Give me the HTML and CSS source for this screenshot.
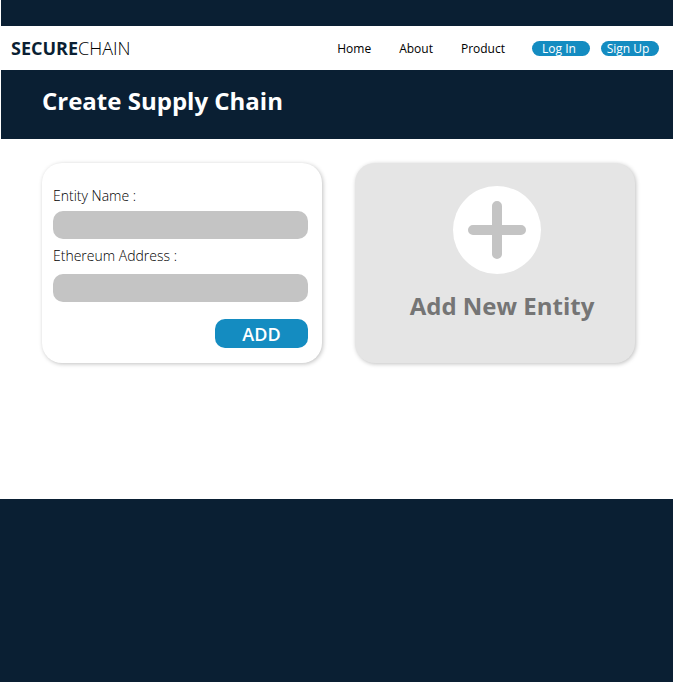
FILE: index.html
```html
<!DOCTYPE html>
<html lang="en">
<head>
<meta charset="utf-8">
<meta name="viewport" content="width=device-width, initial-scale=1">
<title>SecureChain - Create Supply Chain</title>
<link rel="stylesheet" href="styles.css">
</head>
<body>
<header class="header">
  <div class="topbar">
    <a class="logo" href="#"><span class="logo-strong">SECURE</span>CHAIN</a>
    <nav class="nav">
      <a class="nav-link" href="#">Home</a>
      <a class="nav-link" href="#">About</a>
      <a class="nav-link" href="#">Product</a>
    </nav>
    <div class="account">
      <button class="pill" type="button">Log In</button>
      <button class="pill" type="button">Sign Up</button>
    </div>
  </div>
  <h1 class="title">Create Supply Chain</h1>
</header>
<main class="main">
  <form class="card entity-form">
    <label class="label" for="entity-name">Entity Name :</label>
    <input class="field" id="entity-name" type="text">
    <label class="label label-address" for="eth-address">Ethereum Address :</label>
    <input class="field" id="eth-address" type="text">
    <button class="add" type="button">ADD</button>
  </form>
  <button class="card new-entity" type="button">
    <svg class="plus" viewBox="0 0 88 88" aria-hidden="true">
      <circle cx="44" cy="44" r="44" fill="#fff"/>
      <path d="M44 20v48M20 44h48" stroke="#c4c4c4" stroke-width="10" stroke-linecap="round"/>
    </svg>
    <span class="new-entity-text">Add New Entity</span>
  </button>
</main>
<footer class="footer"></footer>
</body>
</html>
```
FILE: styles.css
```css
* {
  box-sizing: border-box;
}

body {
  display: flex;
  flex-direction: column;
  min-height: 100vh;
  margin: 0;
  background: #fff;
  color: #000;
  font-family: "Open Sans", sans-serif;
}

button,
input {
  border: 0;
  font-family: inherit;
}

a {
  color: inherit;
  text-decoration: none;
}

.header {
  margin-left: 1px;
  padding-top: 26px;
  background: #0a1f33;
}

.topbar {
  display: flex;
  align-items: center;
  height: 44px;
  padding: 0 14px 0 10px;
  background: #fff;
}

.logo {
  margin-right: auto;
  font-size: 18px;
  font-weight: 300;
  line-height: 24px;
}

.logo-strong {
  color: #0a1f33;
  font-weight: 700;
}

.nav {
  display: flex;
  gap: 28px;
  margin-right: 27px;
}

.nav-link {
  padding-top: 1px;
  font-size: 12px;
  line-height: 16px;
}

.account {
  display: flex;
  gap: 11px;
}

.pill {
  width: 58px;
  height: 15px;
  padding: 0 4px 0 0;
  border-radius: 8px;
  background: #148cc1;
  color: #fff;
  font-size: 12px;
  line-height: 15px;
  white-space: nowrap;
}

.title {
  margin: 0;
  padding: 15px 41px 22px;
  color: #fff;
  font-size: 24px;
  font-weight: 700;
  line-height: 32px;
}

.main {
  display: grid;
  grid-template-columns: 1fr 1fr;
  gap: 33px;
  align-items: start;
  min-height: 360px;
  padding: 24px 38px 24px 42px;
}

.card {
  height: 200px;
  border-radius: 20px;
  box-shadow: 1px 1px 4px rgba(0, 0, 0, 0.25);
}

.entity-form {
  display: flex;
  flex-direction: column;
  padding: 23px 14px 15px 11px;
  background: #fff;
}

.label {
  margin-bottom: 5px;
  font-size: 14px;
  font-weight: 300;
  line-height: 20px;
}

.label-address {
  margin: 7px 0 8px;
}

.field {
  width: 100%;
  height: 28px;
  padding: 0 10px;
  border-radius: 10px;
  background: #c4c4c4;
  font-size: 14px;
}

.add {
  align-self: flex-end;
  width: 93px;
  height: 29px;
  margin-top: 17px;
  padding: 1px 0 0;
  border-radius: 10px;
  background: #148cc1;
  color: #fff;
  font-size: 18px;
  font-weight: 600;
  line-height: 28px;
}

.new-entity {
  display: flex;
  flex-direction: column;
  align-items: center;
  gap: 16px;
  padding: 23px 0 0 4px;
  background: #e5e5e5;
}

.plus {
  width: 88px;
  height: 88px;
  fill: none;
}

.new-entity-text {
  padding-left: 10px;
  color: #757575;
  font-size: 24px;
  font-weight: 700;
  line-height: 32px;
}

.footer {
  flex: 1;
  background: #0a1f33;
}
```
